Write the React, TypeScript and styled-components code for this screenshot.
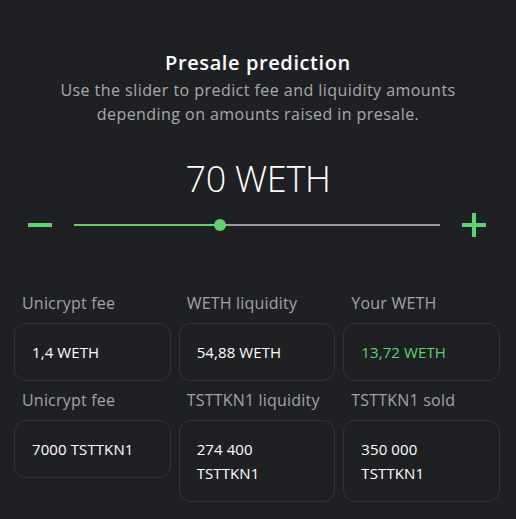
import * as React from "react";
import styled, { createGlobalStyle } from "styled-components";

const GlobalStyle = createGlobalStyle`
    html, body {
        margin: 0;
        background: #1f2024;
    }
    body {
        font-family: "Open Sans", "Liberation Sans", sans-serif;
        color: #ffffff;
    }
`;

interface Stat {
    label: string;
    value: string[];
    accent?: boolean;
}

const stats: Stat[] = [
    { label: "Unicrypt fee", value: ["1,4 WETH"] },
    { label: "WETH liquidity", value: ["54,88 WETH"] },
    { label: "Your WETH", value: ["13,72 WETH"], accent: true },
    { label: "Unicrypt fee", value: ["7000 TSTTKN1"] },
    { label: "TSTTKN1 liquidity", value: ["274 400", "TSTTKN1"] },
    { label: "TSTTKN1 sold", value: ["350 000", "TSTTKN1"] },
];

const GREEN = "#5fd272";

const Page = styled.div`
    display: flex;
    flex-direction: column;
    padding-top: 48px;
`;

const Header = styled.header`
    display: flex;
    flex-direction: column;
    align-items: center;
    text-align: center;
`;

const Title = styled.h2`
    margin: 0;
    font-size: 20px;
    line-height: 30px;
    font-weight: 600;
    letter-spacing: 0.6px;
    color: #ffffff;
`;

const Subtitle = styled.p`
    margin: 0;
    font-size: 16px;
    line-height: 24px;
    letter-spacing: 0.45px;
    color: #a9a9ac;
`;

const Amount = styled.div`
    margin-top: 29px;
    text-align: center;
    font-size: 36px;
    font-weight: 300;
    line-height: 48px;
    letter-spacing: -0.3px;
    color: #ffffff;
`;

const SliderRow = styled.div`
    display: flex;
    align-items: center;
    gap: 22px;
    height: 24px;
    margin: 10px 30px 0 28px;
`;

const StepButton = styled.button`
    display: flex;
    padding: 0;
    border: 0;
    background: none;
    cursor: pointer;
`;

const Track = styled.div`
    position: relative;
    flex: 1;
    height: 2px;
`;

const Thumb = styled.span`
    position: absolute;
    top: 50%;
    width: 12px;
    height: 12px;
    border-radius: 50%;
    background: ${GREEN};
    transform: translate(-50%, -50%);
`;

const Grid = styled.div`
    display: grid;
    grid-template-columns: repeat(3, 1fr);
    column-gap: 8px;
    row-gap: 7px;
    align-items: start;
    margin: 54px 16px 0 14px;
`;

const Cell = styled.div`
    display: flex;
    flex-direction: column;
    gap: 8px;
`;

const Label = styled.span`
    padding-left: 8px;
    font-size: 16px;
    line-height: 24px;
    letter-spacing: 0.2px;
    color: #a3a3a6;
`;

const ValueBox = styled.div<{ $accent?: boolean }>`
    padding: 16px 17px;
    border: 1px solid #34353a;
    border-radius: 12px;
    font-size: 15px;
    line-height: 24px;
    letter-spacing: 0.1px;
    color: ${(p) => (p.$accent ? GREEN : "#ffffff")};
`;

const Minus = () => (
    <svg width="24" height="24" viewBox="0 0 24 24">
        <rect x="0" y="10" width="24" height="4" fill={GREEN} />
    </svg>
);

const Plus = () => (
    <svg width="24" height="24" viewBox="0 0 24 24">
        <rect x="0" y="10" width="24" height="4" fill={GREEN} />
        <rect x="10" y="0" width="4" height="24" fill={GREEN} />
    </svg>
);

export default function App() {
    const min = 0;
    const max = 175;
    const value = 70;
    const pct = ((value - min) / (max - min)) * 100;

    return (
        <Page>
            <GlobalStyle />
            <Header>
                <Title>Presale prediction</Title>
                <Subtitle>
                    Use the slider to predict fee and liquidity amounts
                    <br />
                    depending on amounts raised in presale.
                </Subtitle>
            </Header>
            <Amount>{value} WETH</Amount>
            <SliderRow>
                <StepButton aria-label="decrease">
                    <Minus />
                </StepButton>
                <Track
                    style={{
                        background: `linear-gradient(to right, ${GREEN} ${pct}%, #9b9b9d ${pct}%)`,
                    }}
                >
                    <Thumb style={{ left: `${pct}%` }} />
                </Track>
                <StepButton aria-label="increase">
                    <Plus />
                </StepButton>
            </SliderRow>
            <Grid>
                {stats.map((s, i) => (
                    <Cell key={i}>
                        <Label>{s.label}</Label>
                        <ValueBox $accent={s.accent}>
                            {s.value.map((line, j) => (
                                <div key={j}>{line}</div>
                            ))}
                        </ValueBox>
                    </Cell>
                ))}
            </Grid>
        </Page>
    );
}
